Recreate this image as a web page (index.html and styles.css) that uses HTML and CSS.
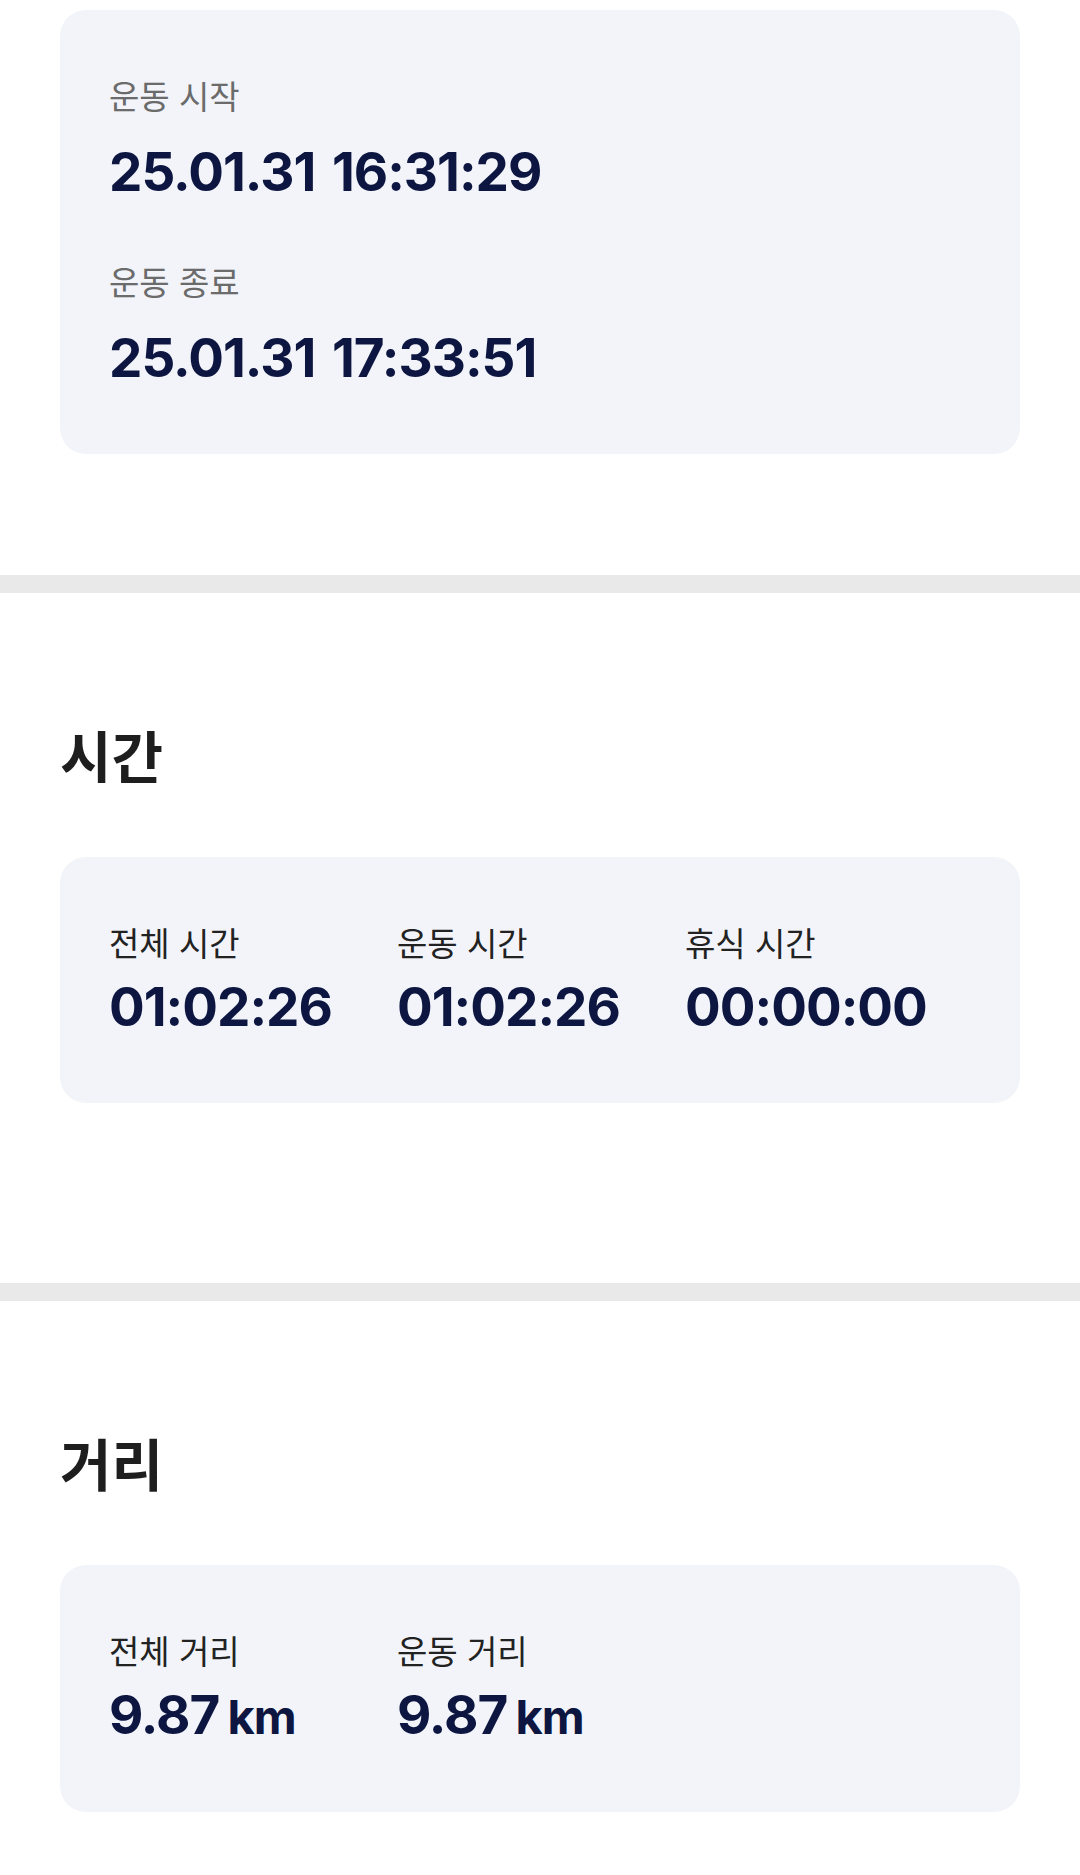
FILE: index.html
```html
<!DOCTYPE html>
<html lang="ko">
<head>
    <meta charset="UTF-8">
    <meta name="viewport" content="width=device-width, initial-scale=1.0">
    <title>운동 기록</title>
    <link rel="stylesheet" href="styles.css">
</head>
<body>
    <!-- Start / end -->
    <section class="section section-top">
        <div class="card card-period">
            <div class="stat">
                <p class="stat-label muted">운동 시작</p>
                <p class="stat-value">25.01.31 16:31:29</p>
            </div>
            <div class="stat">
                <p class="stat-label muted">운동 종료</p>
                <p class="stat-value">25.01.31 17:33:51</p>
            </div>
        </div>
    </section>

    <div class="divider"></div>

    <!-- Time -->
    <section class="section">
        <h2 class="section-title">시간</h2>
        <div class="card card-grid">
            <div class="stat">
                <p class="stat-label">전체 시간</p>
                <p class="stat-value">01:02:26</p>
            </div>
            <div class="stat">
                <p class="stat-label">운동 시간</p>
                <p class="stat-value">01:02:26</p>
            </div>
            <div class="stat">
                <p class="stat-label">휴식 시간</p>
                <p class="stat-value">00:00:00</p>
            </div>
        </div>
    </section>

    <div class="divider"></div>

    <!-- Distance -->
    <section class="section">
        <h2 class="section-title">거리</h2>
        <div class="card card-grid">
            <div class="stat">
                <p class="stat-label">전체 거리</p>
                <p class="stat-value">9.87<span class="unit">km</span></p>
            </div>
            <div class="stat">
                <p class="stat-label">운동 거리</p>
                <p class="stat-value">9.87<span class="unit">km</span></p>
            </div>
        </div>
    </section>
</body>
</html>
```

FILE: styles.css
```css
* {
    margin: 0;
    padding: 0;
    box-sizing: border-box;
}

body {
    background: #ffffff;
    font-family: 'Noto Sans CJK KR', 'Noto Sans', sans-serif;
    color: #1e1e1e;
}

.section {
    padding: 129px 60px 180px;
}
.section-top {
    padding: 10px 60px 121px;
}
.section:last-child {
    padding-bottom: 0;
}

.divider {
    height: 18px;
    background: #e9e9e9;
}

.section-title {
    font-size: 56px;
    font-weight: 700;
    line-height: 64px;
    color: #1e1e1e;
    margin-bottom: 71px;
}

/* Cards */
.card {
    background: #f2f4f9;
    border-radius: 26px;
    padding: 65px 49px 69px;
}
.card-period {
    display: flex;
    flex-direction: column;
    gap: 62px;
}
.card-period .stat {
    gap: 31px;
}
.card-grid {
    display: grid;
    grid-template-columns: repeat(3, 288px);
}

.stat {
    display: flex;
    flex-direction: column;
    gap: 19px;
}
.stat-label {
    font-size: 33px;
    line-height: 40px;
    color: #222222;
}
.stat-label.muted {
    color: #6b6b6b;
}
.stat-value {
    font-family: 'Inter', 'Roboto', sans-serif;
    font-size: 53px;
    font-weight: 700;
    line-height: 53px;
    letter-spacing: -1px;
    word-spacing: 5px;
    color: #0c1640;
    white-space: nowrap;
}
.unit {
    margin-left: 8px;
    font-size: 47px;
}
```
